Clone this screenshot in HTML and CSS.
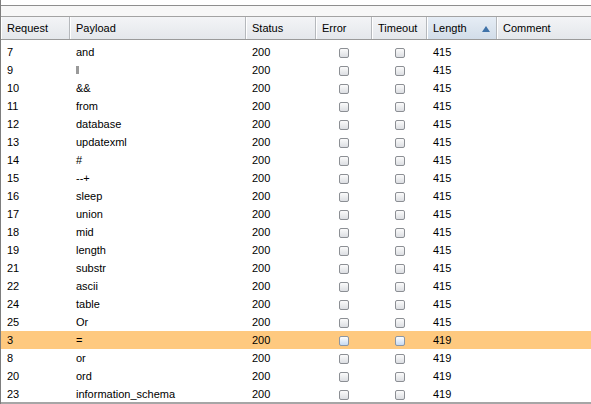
FILE: index.html
```html
<!DOCTYPE html>
<html>
<head>
<meta charset="utf-8">
<link rel="stylesheet" href="styles.css">
</head>
<body>
<div class="frame">
  <div class="topstrip"></div>
  <div class="gapstrip"></div>
  <div class="table">
    <div class="head">
      <div class="hc">Request</div>
      <div class="hc">Payload</div>
      <div class="hc">Status</div>
      <div class="hc">Error</div>
      <div class="hc">Timeout</div>
      <div class="hc sorted">Length<span class="tri"></span></div>
      <div class="hc last">Comment</div>
    </div>
    <div class="body">
      <div class="rows">
        <div class="row partial"><div class="c"></div><div class="c"></div><div class="c"></div><div class="c cb"><span class="box"></span></div><div class="c cb"><span class="box"></span></div><div class="c"></div><div class="c"></div></div>
        <div class="row"><div class="c">7</div><div class="c">and</div><div class="c">200</div><div class="c cb"><span class="box"></span></div><div class="c cb"><span class="box"></span></div><div class="c">415</div><div class="c"></div></div>
        <div class="row"><div class="c">9</div><div class="c"><span class="ctl"></span></div><div class="c">200</div><div class="c cb"><span class="box"></span></div><div class="c cb"><span class="box"></span></div><div class="c">415</div><div class="c"></div></div>
        <div class="row"><div class="c">10</div><div class="c">&amp;&amp;</div><div class="c">200</div><div class="c cb"><span class="box"></span></div><div class="c cb"><span class="box"></span></div><div class="c">415</div><div class="c"></div></div>
        <div class="row"><div class="c">11</div><div class="c">from</div><div class="c">200</div><div class="c cb"><span class="box"></span></div><div class="c cb"><span class="box"></span></div><div class="c">415</div><div class="c"></div></div>
        <div class="row"><div class="c">12</div><div class="c">database</div><div class="c">200</div><div class="c cb"><span class="box"></span></div><div class="c cb"><span class="box"></span></div><div class="c">415</div><div class="c"></div></div>
        <div class="row"><div class="c">13</div><div class="c">updatexml</div><div class="c">200</div><div class="c cb"><span class="box"></span></div><div class="c cb"><span class="box"></span></div><div class="c">415</div><div class="c"></div></div>
        <div class="row"><div class="c">14</div><div class="c">#</div><div class="c">200</div><div class="c cb"><span class="box"></span></div><div class="c cb"><span class="box"></span></div><div class="c">415</div><div class="c"></div></div>
        <div class="row"><div class="c">15</div><div class="c">--+</div><div class="c">200</div><div class="c cb"><span class="box"></span></div><div class="c cb"><span class="box"></span></div><div class="c">415</div><div class="c"></div></div>
        <div class="row"><div class="c">16</div><div class="c">sleep</div><div class="c">200</div><div class="c cb"><span class="box"></span></div><div class="c cb"><span class="box"></span></div><div class="c">415</div><div class="c"></div></div>
        <div class="row"><div class="c">17</div><div class="c">union</div><div class="c">200</div><div class="c cb"><span class="box"></span></div><div class="c cb"><span class="box"></span></div><div class="c">415</div><div class="c"></div></div>
        <div class="row"><div class="c">18</div><div class="c">mid</div><div class="c">200</div><div class="c cb"><span class="box"></span></div><div class="c cb"><span class="box"></span></div><div class="c">415</div><div class="c"></div></div>
        <div class="row"><div class="c">19</div><div class="c">length</div><div class="c">200</div><div class="c cb"><span class="box"></span></div><div class="c cb"><span class="box"></span></div><div class="c">415</div><div class="c"></div></div>
        <div class="row"><div class="c">21</div><div class="c">substr</div><div class="c">200</div><div class="c cb"><span class="box"></span></div><div class="c cb"><span class="box"></span></div><div class="c">415</div><div class="c"></div></div>
        <div class="row"><div class="c">22</div><div class="c">ascii</div><div class="c">200</div><div class="c cb"><span class="box"></span></div><div class="c cb"><span class="box"></span></div><div class="c">415</div><div class="c"></div></div>
        <div class="row"><div class="c">24</div><div class="c">table</div><div class="c">200</div><div class="c cb"><span class="box"></span></div><div class="c cb"><span class="box"></span></div><div class="c">415</div><div class="c"></div></div>
        <div class="row"><div class="c">25</div><div class="c">Or</div><div class="c">200</div><div class="c cb"><span class="box"></span></div><div class="c cb"><span class="box"></span></div><div class="c">415</div><div class="c"></div></div>
        <div class="row sel"><div class="c">3</div><div class="c">=</div><div class="c">200</div><div class="c cb"><span class="box"></span></div><div class="c cb"><span class="box"></span></div><div class="c">419</div><div class="c"></div></div>
        <div class="row"><div class="c">8</div><div class="c">or</div><div class="c">200</div><div class="c cb"><span class="box"></span></div><div class="c cb"><span class="box"></span></div><div class="c">419</div><div class="c"></div></div>
        <div class="row"><div class="c">20</div><div class="c">ord</div><div class="c">200</div><div class="c cb"><span class="box"></span></div><div class="c cb"><span class="box"></span></div><div class="c">419</div><div class="c"></div></div>
        <div class="row"><div class="c">23</div><div class="c">information_schema</div><div class="c">200</div><div class="c cb"><span class="box"></span></div><div class="c cb"><span class="box"></span></div><div class="c">419</div><div class="c"></div></div>
      </div>
    </div>
  </div>
</div>
</body>
</html>
```
FILE: styles.css
```css
html, body {
  margin: 0;
  padding: 0;
  background: #ffffff;
}
body {
  width: 591px;
  height: 404px;
  overflow: hidden;
  font-family: "Liberation Sans", Arial, sans-serif;
  font-size: 11px;
  color: #000;
}
.frame {
  width: 591px;
  height: 404px;
  display: flex;
  flex-direction: column;
  border-left: 1px solid #7d7d7d;
  box-sizing: border-box;
}
.topstrip {
  height: 5px;
  background: #ffffff;
  border-bottom: 1px solid #8e8e8e;
}
.gapstrip {
  height: 10px;
  background: #f7f7f7;
}
.table {
  flex: 1;
  display: flex;
  flex-direction: column;
  border-bottom: 2px solid #a6a6a6;
  min-height: 0;
}
.head, .row {
  display: grid;
  grid-template-columns: 69px 176px 70px 56px 55px 70px 1fr;
}
.head {
  height: 22px;
  border-top: 1px solid #a3a3a3;
  border-bottom: 1px solid #9a9a9a;
  background: linear-gradient(#f3f4f6, #e4e7eb);
}
.hc {
  display: flex;
  align-items: center;
  padding-left: 6px;
  border-right: 1px solid #b5b8bc;
  box-shadow: inset 1px 0 0 #ffffff;
  position: relative;
}
.hc.last {
  border-right: none;
}
.hc.sorted {
  background: linear-gradient(#e6edf5, #d2dde9);
}
.tri {
  position: absolute;
  right: 6px;
  top: 9px;
  width: 0;
  height: 0;
  border-left: 4px solid transparent;
  border-right: 4px solid transparent;
  border-bottom: 6px solid #3f72a8;
}
.body {
  flex: 1;
  overflow: hidden;
  min-height: 0;
}
.rows {
  margin-top: -15px;
}
.row {
  height: 18px;
}
.row.sel {
  background: #fec97f;
}
.c {
  display: flex;
  align-items: center;
  padding-left: 6px;
  white-space: nowrap;
  overflow: hidden;
}
.c.cb {
  justify-content: center;
  padding-left: 0;
}
.box {
  display: block;
  width: 8px;
  height: 8px;
  border: 1px solid #8c8f94;
  border-radius: 2px;
  background: linear-gradient(#fbfbfb, #dcdee2);
  margin-top: 1px;
}
.row.sel .box {
  background: linear-gradient(#ffffff, #c6daf3);
  border-color: #8a96a6;
}
.ctl {
  display: inline-block;
  width: 3px;
  height: 8px;
  background: #9a9a9a;
}
```
